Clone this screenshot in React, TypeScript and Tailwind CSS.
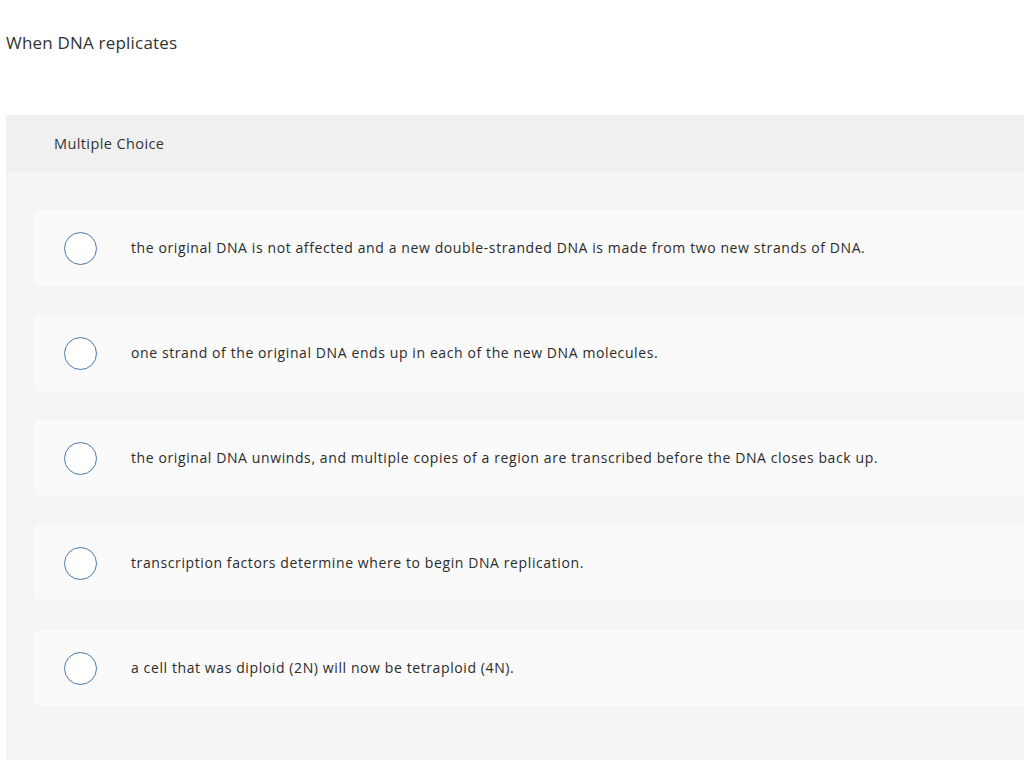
import React from 'react';

const options = [
  'the original DNA is not affected and a new double-stranded DNA is made from two new strands of DNA.',
  'one strand of the original DNA ends up in each of the new DNA molecules.',
  'the original DNA unwinds, and multiple copies of a region are transcribed before the DNA closes back up.',
  'transcription factors determine where to begin DNA replication.',
  'a cell that was diploid (2N) will now be tetraploid (4N).',
];

const App: React.FC = () => {
  return (
    <div className="min-h-[760px] bg-white text-[#333] font-['Open_Sans',sans-serif] overflow-hidden">
      <h1 className="pl-[6px] pt-[31px] text-[17px] leading-[24px] font-normal tracking-[0.2px]">When DNA replicates</h1>
      <div className="ml-[6px] mt-[60px] bg-[#f5f5f5] pb-[60px]">
        <div className="bg-[#f0f0f0] h-[57px] pl-[48px] flex items-center text-[14.5px] tracking-[0.4px]">Multiple Choice</div>
        <div className="pt-[38px] pl-[29px] flex flex-col gap-[29px]">
          {options.map((o) => (
            <label key={o} className="h-[76px] bg-[#fafafa] rounded-l-[3px] flex items-center cursor-pointer">
              <span className="ml-[29px] w-[33px] h-[33px] rounded-full border border-[#4a78a8] bg-white flex-shrink-0" />
              <span className="ml-[34px] text-[14px] text-[#2b2b2b] pb-[2px] tracking-[0.6px]">{o}</span>
            </label>
          ))}
        </div>
      </div>
    </div>
  );
};

export default App;
